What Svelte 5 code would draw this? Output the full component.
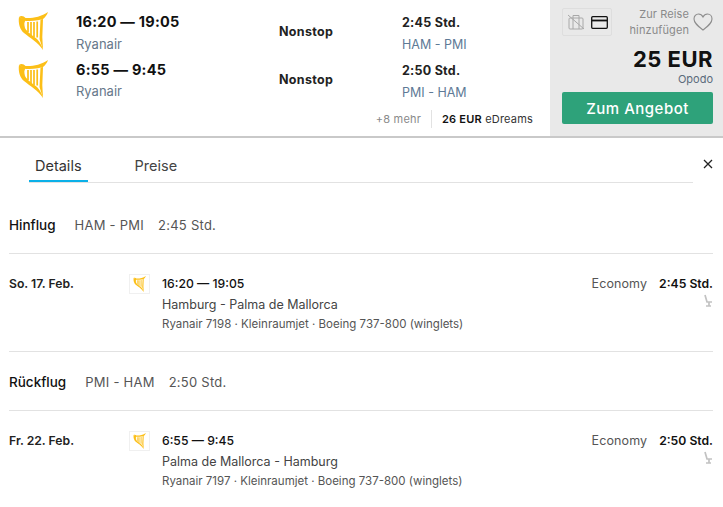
<script>
  const legs = [
    { time: '16:20 — 19:05', dur: '2:45 Std.', route: 'HAM - PMI' },
    { time: '6:55 — 9:45', dur: '2:50 Std.', route: 'PMI - HAM' }
  ];
  const details = [
    { label: 'Hinflug', route: 'HAM - PMI', dur: '2:45 Std.', date: 'So. 17. Feb.', time: '16:20 — 19:05', cities: 'Hamburg - Palma de Mallorca', info: 'Ryanair 7198 · Kleinraumjet · Boeing 737-800 (winglets)' },
    { label: 'Rückflug', route: 'PMI - HAM', dur: '2:50 Std.', date: 'Fr. 22. Feb.', time: '6:55 — 9:45', cities: 'Palma de Mallorca - Hamburg', info: 'Ryanair 7197 · Kleinraumjet · Boeing 737-800 (winglets)' }
  ];
</script>

{#snippet harp(w)}
  <svg width={w} height={w * 38 / 30} viewBox="0 0 30 38">
    <g fill="#fcbf17">
      <path d="M1 5C3 3 6 4 7.500 6 14 6.500 23 5 30 0 29 3 27 5.500 25 7 18 9 12 9 8 9z"/>
      <path d="M1 5C0 11 2 18 6 21 12 26 20 30 25 38 24 34 22 30 19 27 14 23 9 20 7 16 6 12 6 10 8 8z"/>
      <path d="M22.500 7.500 25 7 24.300 25 25 38 21.500 27z"/>
    </g>
    <path d="M10 10v10M13 10v13M16 10v15M19.200 9.500v16" stroke="#fcbf17" stroke-width="1.700" fill="none"/>
  </svg>
{/snippet}

<div class="page">
  <header class="top">
    <div class="legs">
      {#each legs as leg}
        <div class="leg">
          <div class="logo">{@render harp(30)}</div>
          <div class="times">
            <div class="time">{leg.time}</div>
            <div class="air">Ryanair</div>
          </div>
          <div class="stops">Nonstop</div>
          <div class="dur">
            <div class="durval">{leg.dur}</div>
            <div class="route">{leg.route}</div>
          </div>
        </div>
      {/each}
      <div class="more">
        <span class="moretxt">+8 mehr</span>
        <span class="alt"><b>26 EUR</b> eDreams</span>
      </div>
    </div>
    <aside class="side">
      <div class="siderow">
        <div class="icons">
          <svg width="18" height="16" viewBox="0 0 18 16" fill="none" stroke="#a8a8a8">
            <rect x="2" y="4" width="14" height="11" rx="1"/><path d="M6 4V1.500h6V4M1 1l16 14M6 4v11M12 4v11"/>
          </svg>
          <svg width="17" height="13" viewBox="0 0 17 13" fill="none" stroke="#111" stroke-width="1.300">
            <rect x=".7" y=".7" width="15.600" height="11.600" rx="1"/><path d="M1 4.500h15" stroke-width="1.800"/>
          </svg>
        </div>
        <div class="addtrip">Zur Reise<br>hinzufügen</div>
        <svg class="heart" width="20" height="18" viewBox="0 0 20 18" fill="none" stroke="#8d8d8d" stroke-width="1.100">
          <path d="M10 17C5 13 1 10 1 6c0-3 2-5 4.500-5C7.500 1 9 2 10 4c1-2 2.500-3 4.500-3C17 1 19 3 19 6c0 4-4 7-9 11z"/>
        </svg>
      </div>
      <div class="price">25 EUR</div>
      <div class="seller">Opodo</div>
      <button class="cta">Zum Angebot</button>
    </aside>
  </header>

  <nav class="tabs">
    <div class="tablist">
      <span class="tab active">Details</span>
      <span class="tab">Preise</span>
    </div>
    <svg class="close" width="10" height="10" viewBox="0 0 10 10" stroke="#222" stroke-width="1.300"><path d="M1 1l8 8M9 1l-8 8"/></svg>
  </nav>

  {#each details as d, i}
    <section class="flight" class:first={i === 0}>
      <div class="head">
        <span class="label">{d.label}</span>
        <span class="sub">{d.route}</span>
        <span class="sub">{d.dur}</span>
      </div>
      <div class="body">
        <div class="date">{d.date}</div>
        <div class="minilogo">{@render harp(13)}</div>
        <div class="info">
          <div class="t1">{d.time}</div>
          <div class="t2">{d.cities}</div>
          <div class="t3">{d.info}</div>
        </div>
        <div class="right">
          <div><span class="cabin">Economy</span><b class="rdur">{d.dur}</b></div>
          <svg class="seat" width="10" height="13" viewBox="0 0 10 13" fill="none" stroke="#c2c2c2" stroke-width="1.700"><path d="M2 1l2 7h5M6 8v4M3 12h5"/></svg>
        </div>
      </div>
    </section>
  {/each}
</div>

<style>
  :global(body) { background: #fff; }
  .page { width: 723px; height: 507px; overflow: hidden; font-family: Inter, "Noto Sans", sans-serif; color: #222; font-size: 12.5px; }
  .top { display: flex; height: 136px; border-bottom: 2px solid #c9c9c9; }
  .legs { width: 550px; padding-top: 12px; box-sizing: border-box; }
  .leg { display: flex; height: 47.5px; }
  .logo { width: 76px; padding-left: 18px; box-sizing: border-box; }
  .times { width: 203px; }
  .time { font-size: 14.5px; font-weight: 700; line-height: 20px; color: #111; letter-spacing: .25px; }
  .air { color: #66788a; margin-top: 1.5px; font-size: 13px; line-height: 20px; }
  .stops { width: 123px; font-weight: 700; line-height: 18px; margin-top: 11px; font-size: 12.5px; letter-spacing: .3px; }
  .durval { font-weight: 700; font-size: 12.5px; line-height: 20px; margin-top: 1px; letter-spacing: .25px; }
  .route { color: #5e7a96; margin-top: 2px; font-size: 12.5px; line-height: 20px; }
  .more { display: flex; justify-content: flex-end; align-items: center; font-size: 11px; letter-spacing: .2px; padding: 0 17px 0 0; margin-top: 3px; }
  .moretxt { color: #8a8a8a; padding-right: 10px; border-right: 1px solid #e2e2e2; margin-right: 10px; line-height: 18px; }
  .alt { color: #333; }
  .alt b { font-weight: 600; color: #111; }
  .side { width: 173px; background: #e9e9e9; display: flex; flex-direction: column; align-items: flex-end; padding: 6px 10px 0 12px; box-sizing: border-box; }
  .siderow { display: flex; width: 100%; align-items: center; }
  .icons { display: flex; gap: 6px; align-items: center; border: 1px solid #dedede; padding: 5px 3px 5px 4px; border-radius: 2px; }
  .addtrip { flex: 1; text-align: right; font-size: 11px; line-height: 16px; color: #8a8a8a; margin-right: 4px; letter-spacing: .1px; }
  .price { font-size: 22px; font-weight: 700; margin-top: 8px; line-height: 26px; color: #111; letter-spacing: .5px; }
  .seller { font-size: 11px; color: #5b6b7b; line-height: 14px; }
  .cta { width: 151px; height: 32px; margin-top: 6px; background: #2ea27a; color: #fff; border: none; border-radius: 2px; font: 500 15px Inter, sans-serif; letter-spacing: .5px; }
  .tabs { display: flex; align-items: center; height: 45px; margin: 0 10px 0 29px; }
  .tablist { flex: 1; display: flex; height: 100%; border-bottom: 1px solid #e2e2e2; margin-right: 10px; box-sizing: border-box; }
  .tab { font-size: 14.5px; color: #444; padding: 19px 6px 0; margin-right: 41px; box-sizing: border-box; }
  .tab.active { border-bottom: 2px solid #0bb0e8; color: #333; height: 44px; }
  .close { margin-top: 7px; }
  .flight { margin: 0 10px 0 9px; }
  .head { display: flex; gap: 14px; align-items: center; height: 57px; padding-top: 1px; box-sizing: content-box; border-bottom: 1px solid #e2e2e2; }
  .first .head { padding-top: 15px; box-sizing: border-box; height: 71px; padding-bottom: 1px; }
  .label { font-size: 13.5px; font-weight: 500; color: #111; margin-right: 5px; }
  .sub { font-size: 13px; color: #555; letter-spacing: .25px; }
  .body { display: flex; height: 98px; padding-top: 21px; box-sizing: border-box; }
  .first .body { border-bottom: 1px solid #e2e2e2; }
  .date { width: 120px; font-weight: 600; font-size: 12.2px; line-height: 18px; }
  .minilogo { width: 33px; height: 19px; margin-top: -1px; }
  .minilogo :global(svg) { box-sizing: content-box; width: 13px; height: 16px; padding: 1px 3px 1px 3px; border: 1px solid #f0f0f0; }
  .info { flex: 1; }
  .t1 { font-weight: 500; font-size: 12.2px; line-height: 18px; color: #111; }
  .t2 { margin-top: 3px; font-size: 12.5px; line-height: 18px; color: #444; }
  .t3 { margin-top: 2px; font-size: 11.5px; line-height: 16px; color: #555; }
  .right { text-align: right; line-height: 18px; }
  .cabin { color: #555; margin-right: 12px; letter-spacing: .1px; }
  .rdur { font-weight: 600; color: #111; font-size: 12.2px; }
  .seat { display: block; margin: 1px 0 0 auto; }
</style>
